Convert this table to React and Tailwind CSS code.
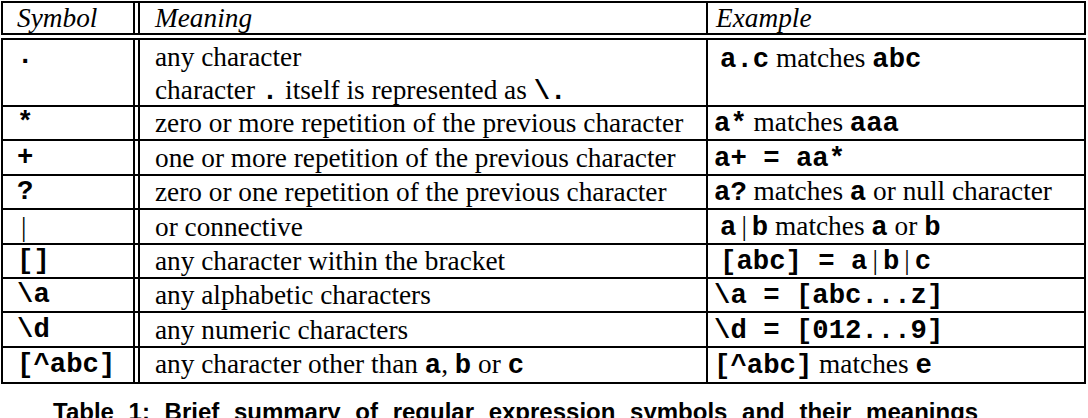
import React from "react";

const M = ({ children }) => (
  <span className="[font-family:'Liberation_Mono','Courier_New',monospace] font-bold">{children}</span>
);
const Bar = () => <span className="mx-[5px]">|</span>;

const rows = [
  { sym: <M>.</M>, mean: null, ex: <><M>a.c</M> matches <M>abc</M></>, exPad: "pl-[12px]", h: "h-[67px]", first: true },
  { sym: <M>*</M>, mean: "zero or more repetition of the previous character", ex: <><M>a*</M> matches <M>aaa</M></>, h: "h-[34px]" },
  { sym: <M>+</M>, mean: "one or more repetition of the previous character", ex: <M>a+ = aa*</M>, h: "h-[35px]" },
  { sym: <M>?</M>, mean: "zero or one repetition of the previous character", ex: <><M>a?</M> matches <M>a</M> or null character</>, h: "h-[34px]" },
  { sym: <span className="ml-[4px]">|</span>, mean: "or connective", ex: <><M>a</M><Bar /><M>b</M> matches <M>a</M> or <M>b</M></>, exPad: "pl-[12px]", h: "h-[35px]" },
  { sym: <M>[]</M>, mean: "any character within the bracket", ex: <><M>[abc] = a</M><Bar /><M>b</M><Bar /><M>c</M></>, exPad: "pl-[12px]", h: "h-[34px]" },
  { sym: <M>\a</M>, mean: "any alphabetic characters", ex: <M>\a = [abc...z]</M>, h: "h-[34px]" },
  { sym: <M>\d</M>, mean: "any numeric characters", ex: <M>\d = [012...9]</M>, h: "h-[35px]" },
  { sym: <M>[^abc]</M>, mean: <>any character other than <M>a</M>, <M>b</M> or <M>c</M></>, ex: <><M>[^abc]</M> matches <M>e</M></>, h: "h-[34px]", last: true },
];

export default function App() {
  return (
    <div className="w-[1088px] h-[418px] overflow-hidden bg-white text-black text-[27.3px] leading-[30px] [font-family:'Liberation_Serif','Times_New_Roman',serif] pl-px pt-px">
      <div className="w-[1085px]">
        {/* header */}
        <div className="flex h-[34px] border-2 border-black italic">
          <div className="w-[132px] border-r-2 border-black pl-[14px] flex items-center">Symbol</div>
          <div className="w-[3px]" />
          <div className="w-[568px] border-l-2 border-black pl-[15px] flex items-center">Meaning</div>
          <div className="flex-1 border-l-2 border-black pl-[8px] flex items-center">Example</div>
        </div>
        {/* body */}
        <div className="mt-[3px] border-2 border-black">
          {rows.map((r, i) => (
            <div key={i} className={`flex ${r.h} ${r.last ? "" : "border-b-2 border-black"}`}>
              <div className={`w-[132px] border-r-2 border-black pl-[14px] flex ${r.first ? "items-start pt-[1px]" : "items-center"}`}>{r.sym}</div>
              <div className="w-[3px]" />
              <div className={`w-[568px] border-l-2 border-black pl-[15px] flex ${r.first ? "flex-col justify-start pt-[1px]" : "items-center"}`}>
                {r.first ? (
                  <>
                    <div className="leading-[33px]">any character</div>
                    <div className="leading-[33px]">character <M>.</M> itself is represented as <M>\.</M></div>
                  </>
                ) : (
                  <span className="whitespace-pre">{r.mean}</span>
                )}
              </div>
              <div className={`flex-1 border-l-2 border-black ${r.exPad || "pl-[6px]"} flex ${r.first ? "items-start pt-[3px]" : "items-center"}`}>
                <span className="whitespace-pre">{r.ex}</span>
              </div>
            </div>
          ))}
        </div>
        {/* caption */}
        <div className="mt-[14px] pl-[52px] [font-family:'Liberation_Sans',Arial,sans-serif] font-bold text-[24px] leading-[28px] whitespace-nowrap [word-spacing:8px]">
          Table 1: Brief summary of regular expression symbols and their meanings
        </div>
      </div>
    </div>
  );
}
